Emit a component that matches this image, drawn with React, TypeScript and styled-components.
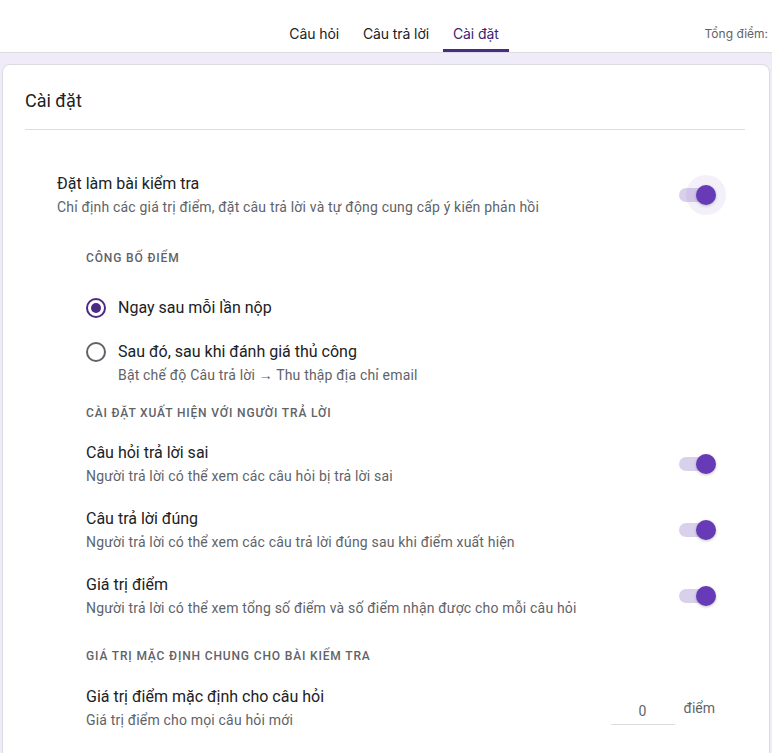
import React from 'react';
import styled, { createGlobalStyle } from 'styled-components';

const Global = createGlobalStyle`
  html, body { margin: 0; padding: 0; background: #f0ebf8; }
  body { font-family: Roboto, "Noto Sans", Arial, sans-serif; color: #202124; overflow: hidden; }
  * { box-sizing: border-box; }
`;

const Page = styled.div`
  width: 772px;
  min-height: 753px;
  background: #f0ebf8;
`;

const TopBar = styled.header`
  height: 53px;
  background: #fff;
  border-bottom: 1px solid #dadce0;
  display: grid;
  grid-template-columns: 1fr auto 1fr;
  align-items: end;
`;

const Tabs = styled.nav`
  grid-column: 2;
  display: flex;
  padding-left: 16px;
`;

const Tab = styled.div<{ $active?: boolean }>`
  font-family: Inter, "Open Sans", sans-serif;
  font-size: 14px;
  letter-spacing: -0.1px;
  color: ${({ $active }) => ($active ? '#3c1f73' : '#202124')};
  height: 52px;
  margin: 0 2px;
  padding: 0 10px 7px;
  display: flex;
  align-items: flex-end;
  border-bottom: 3px solid ${({ $active }) => ($active ? '#4b2a86' : 'transparent')};
`;

const Total = styled.div`
  grid-column: 3;
  justify-self: end;
  font-family: Inter, "Open Sans", sans-serif;
  font-size: 12px;
  color: #5f6368;
  padding-bottom: 11px;
  margin-right: 4px;
  white-space: nowrap;
`;

const Card = styled.section`
  margin: 11px 2px 0;
  background: #fff;
  border: 1px solid #dadce0;
  border-radius: 8px;
  padding: 24px 24px 24px 22px;
  min-height: 720px;
`;

const CardTitle = styled.h1`
  margin: 0;
  font-size: 18px;
  font-weight: 400;
  line-height: 24px;
  padding-bottom: 16px;
  border-bottom: 1px solid #dadce0;
`;

const Setting = styled.div<{ $indent: number; $top: number }>`
  display: flex;
  align-items: center;
  margin-top: ${({ $top }) => $top}px;
  padding-left: ${({ $indent }) => $indent}px;
  padding-right: 29px;
`;

const SettingText = styled.div`
  flex: 1;
  display: flex;
  flex-direction: column;
  gap: 1px;
`;

const Title = styled.div`
  font-size: 16px;
  line-height: 24px;
  color: #202124;
`;

const Sub = styled.div`
  font-size: 14px;
  line-height: 20px;
  letter-spacing: 0.18px;
  color: #5f6368;
`;

const SectionLabel = styled.div<{ $top: number }>`
  margin-top: ${({ $top }) => $top}px;
  padding-left: 61px;
  font-size: 12px;
  line-height: 16px;
  font-weight: 500;
  letter-spacing: 0.85px;
  text-transform: uppercase;
  color: #5f6368;
`;

// Switch in its "on" state: pale track, purple thumb on the right.
const SwitchBox = styled.div<{ $halo?: boolean }>`
  position: relative;
  width: 38px;
  height: 20px;
  flex-shrink: 0;
  &::before {
    content: '';
    position: absolute;
    left: 1px;
    right: 1px;
    top: 3px;
    height: 14px;
    border-radius: 7px;
    background: #d9d1ec;
  }
  &::after {
    content: '';
    position: absolute;
    right: 0;
    top: 0;
    width: 20px;
    height: 20px;
    border-radius: 50%;
    background: #673ab7;
    box-shadow: ${({ $halo }) =>
      $halo
        ? '0 0 0 10px rgba(103, 58, 183, 0.08), 0 1px 3px rgba(0,0,0,0.25)'
        : '0 1px 3px rgba(0,0,0,0.25)'};
  }
`;

const RadioRow = styled.div<{ $top: number }>`
  display: flex;
  align-items: flex-start;
  gap: 12px;
  margin-top: ${({ $top }) => $top}px;
  padding-left: 61px;
`;

const RadioDot = styled.span<{ $checked?: boolean }>`
  width: 20px;
  height: 20px;
  margin-top: 2px;
  border-radius: 50%;
  flex-shrink: 0;
  border: 2px solid ${({ $checked }) => ($checked ? '#4a2a85' : '#5f6368')};
  display: flex;
  align-items: center;
  justify-content: center;
  &::after {
    content: '';
    width: 10px;
    height: 10px;
    border-radius: 50%;
    background: ${({ $checked }) => ($checked ? '#4a2a85' : 'transparent')};
  }
`;

const RadioLabel = styled.div`
  font-size: 16px;
  line-height: 24px;
  color: #202124;
`;

const PointsBox = styled.div`
  display: flex;
  align-items: flex-start;
  gap: 9px;
  margin-right: 1px;
`;

const PointsInput = styled.div`
  width: 64px;
  text-align: center;
  font-size: 14px;
  line-height: 20px;
  color: #5f6368;
  padding-top: 11px;
  padding-bottom: 3px;
  border-bottom: 1px solid #dadce0;
`;

const Unit = styled.div`
  font-size: 14px;
  line-height: 20px;
  color: #5f6368;
  padding-top: 8px;
`;

const viewerRows = [
  { title: 'Câu hỏi trả lời sai', sub: 'Người trả lời có thể xem các câu hỏi bị trả lời sai' },
  { title: 'Câu trả lời đúng', sub: 'Người trả lời có thể xem các câu trả lời đúng sau khi điểm xuất hiện' },
  { title: 'Giá trị điểm', sub: 'Người trả lời có thể xem tổng số điểm và số điểm nhận được cho mỗi câu hỏi' },
];

export default function App() {
  return (
    <Page>
      <Global />
      <TopBar>
        <Tabs>
          <Tab>Câu hỏi</Tab>
          <Tab>Câu trả lời</Tab>
          <Tab $active>Cài đặt</Tab>
        </Tabs>
        <Total>Tổng điểm:</Total>
      </TopBar>
      <Card>
        <CardTitle>Cài đặt</CardTitle>

        <Setting $indent={32} $top={42}>
          <SettingText>
            <Title>Đặt làm bài kiểm tra</Title>
            <Sub>Chỉ định các giá trị điểm, đặt câu trả lời và tự động cung cấp ý kiến phản hồi</Sub>
          </SettingText>
          <SwitchBox $halo />
        </Setting>

        <SectionLabel $top={33}>Công bố điểm</SectionLabel>

        <RadioRow $top={30}>
          <RadioDot $checked />
          <RadioLabel>Ngay sau mỗi lần nộp</RadioLabel>
        </RadioRow>
        <RadioRow $top={20}>
          <RadioDot />
          <SettingText>
            <RadioLabel>Sau đó, sau khi đánh giá thủ công</RadioLabel>
            <Sub>Bật chế độ Câu trả lời → Thu thập địa chỉ email</Sub>
          </SettingText>
        </RadioRow>

        <SectionLabel $top={20}>Cài đặt xuất hiện với người trả lời</SectionLabel>

        {viewerRows.map((r, i) => (
          <Setting key={r.title} $indent={61} $top={i === 0 ? 20 : 21}>
            <SettingText>
              <Title>{r.title}</Title>
              <Sub>{r.sub}</Sub>
            </SettingText>
            <SwitchBox />
          </Setting>
        ))}

        <SectionLabel $top={30}>Giá trị mặc định chung cho bài kiểm tra</SectionLabel>

        <Setting $indent={61} $top={21}>
          <SettingText>
            <Title>Giá trị điểm mặc định cho câu hỏi</Title>
            <Sub>Giá trị điểm cho mọi câu hỏi mới</Sub>
          </SettingText>
          <PointsBox>
            <PointsInput>0</PointsInput>
            <Unit>điểm</Unit>
          </PointsBox>
        </Setting>
      </Card>
    </Page>
  );
}
